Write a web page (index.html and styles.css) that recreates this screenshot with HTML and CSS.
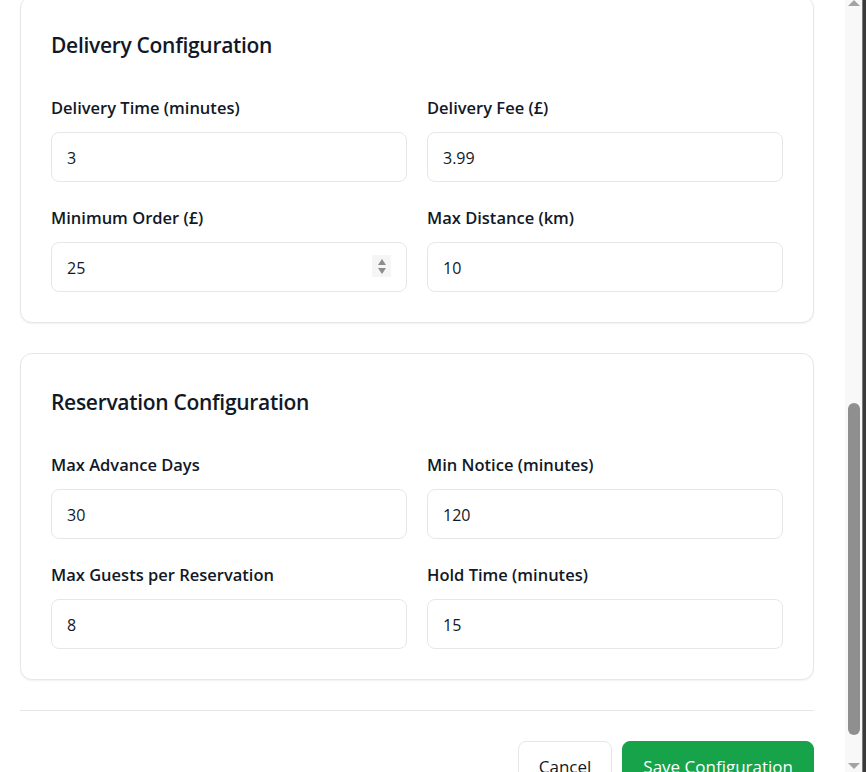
FILE: index.html
```html
<!DOCTYPE html>
<html lang="en">
<head>
<meta charset="utf-8">
<title>Configuration</title>
<link rel="stylesheet" href="styles.css">
</head>
<body>
<div class="window">
  <div class="viewport">
    <section class="card card-first">
      <h2 class="card-title">Delivery Configuration</h2>
      <div class="grid">
        <div class="field">
          <label class="label">Delivery Time (minutes)</label>
          <div class="input-wrap"><input class="input" type="text" value="3"></div>
        </div>
        <div class="field">
          <label class="label">Delivery Fee (£)</label>
          <div class="input-wrap"><input class="input" type="text" value="3.99"></div>
        </div>
        <div class="field">
          <label class="label">Minimum Order (£)</label>
          <div class="input-wrap">
            <input class="input" type="text" value="25">
            <span class="spinner"><span class="tri tri-up"></span><span class="tri tri-down"></span></span>
          </div>
        </div>
        <div class="field">
          <label class="label">Max Distance (km)</label>
          <div class="input-wrap"><input class="input" type="text" value="10"></div>
        </div>
      </div>
    </section>

    <section class="card">
      <h2 class="card-title">Reservation Configuration</h2>
      <div class="grid">
        <div class="field">
          <label class="label">Max Advance Days</label>
          <div class="input-wrap"><input class="input" type="text" value="30"></div>
        </div>
        <div class="field">
          <label class="label">Min Notice (minutes)</label>
          <div class="input-wrap"><input class="input" type="text" value="120"></div>
        </div>
        <div class="field">
          <label class="label">Max Guests per Reservation</label>
          <div class="input-wrap"><input class="input" type="text" value="8"></div>
        </div>
        <div class="field">
          <label class="label">Hold Time (minutes)</label>
          <div class="input-wrap"><input class="input" type="text" value="15"></div>
        </div>
      </div>
    </section>

    <div class="footer">
      <button class="btn btn-cancel" type="button">Cancel</button>
      <button class="btn btn-save" type="button">Save Configuration</button>
    </div>
  </div>
  <div class="scrollbar">
    <span class="arrow arrow-up"></span>
    <span class="thumb"></span>
    <span class="arrow arrow-down"></span>
  </div>
  <div class="edge"></div>
</div>
</body>
</html>
```

FILE: styles.css
```css
* { box-sizing: border-box; }

html, body {
  margin: 0;
  padding: 0;
  background: #ffffff;
}

body {
  font-family: "Open Sans", "Noto Sans", "Liberation Sans", sans-serif;
  color: #111827;
}

.window {
  display: flex;
  width: 866px;
  height: 772px;
  overflow: hidden;
}

.viewport {
  width: 845px;
  height: 772px;
  overflow: hidden;
  padding: 0 31px 0 20px;
  flex: none;
}

.card {
  background: #fff;
  border: 1px solid #e5e7eb;
  border-radius: 12px;
  padding: 30px;
  box-shadow: 0 1px 2px rgba(0, 0, 0, 0.06);
  margin-top: 30px;
}

.card-first {
  margin-top: -4px;
}

.card-title {
  margin: 0 0 33px;
  padding-top: 4px;
  font-size: 21px;
  line-height: 28px;
  font-weight: 600;
  letter-spacing: -0.3px;
}

.grid {
  display: grid;
  grid-template-columns: 1fr 1fr;
  column-gap: 20px;
  row-gap: 20px;
}

.field {
  display: flex;
  flex-direction: column;
}

.label {
  font-size: 16.5px;
  line-height: 24px;
  font-weight: 600;
  padding-top: 4px;
  margin-bottom: 12px;
}

.input-wrap {
  position: relative;
}

.input {
  display: block;
  width: 100%;
  height: 50px;
  border: 1px solid #e5e7eb;
  border-radius: 8px;
  padding: 1px 15px 0;
  font-family: inherit;
  font-size: 16px;
  color: #111827;
  background: #fff;
  outline: none;
}

.spinner {
  position: absolute;
  right: 16px;
  top: 13px;
  width: 19px;
  height: 22px;
  background: #f5f5f5;
  display: flex;
  flex-direction: column;
  align-items: center;
  justify-content: center;
  gap: 3px;
}

.tri {
  width: 0;
  height: 0;
  border-left: 4.5px solid transparent;
  border-right: 4.5px solid transparent;
}

.tri-up { border-bottom: 6px solid #8c8c8c; }
.tri-down { border-top: 6px solid #8c8c8c; }

.footer {
  margin-top: 30px;
  border-top: 1px solid #e5e7eb;
  padding-top: 30px;
  display: flex;
  justify-content: flex-end;
  gap: 10px;
}

.btn {
  height: 48px;
  padding: 3px 20px 0;
  border-radius: 8px;
  font-family: inherit;
  font-size: 17px;
  font-weight: 500;
  cursor: pointer;
}

.btn-cancel {
  background: #fff;
  border: 1px solid #e5e7eb;
  color: #111827;
}

.btn-save {
  background: #16a34a;
  border: 1px solid #16a34a;
  color: #fff;
}

.scrollbar {
  width: 17px;
  height: 772px;
  background: #f8f8f8;
  display: flex;
  flex-direction: column;
  align-items: center;
  flex: none;
}

.arrow {
  width: 0;
  height: 0;
  border-left: 6px solid transparent;
  border-right: 6px solid transparent;
}

.arrow-up {
  border-bottom: 6px solid #a3a3a3;
}

.thumb {
  width: 12px;
  height: 332px;
  margin-top: 397px;
  border-radius: 6px;
  background: #8f8f8f;
}

.arrow-down {
  margin-top: 28px;
  border-top: 6px solid #a3a3a3;
}

.edge {
  width: 4px;
  height: 772px;
  flex: none;
  background: #3a3a3a;
  border-left: 1px solid #7a7a7a;
}
```
